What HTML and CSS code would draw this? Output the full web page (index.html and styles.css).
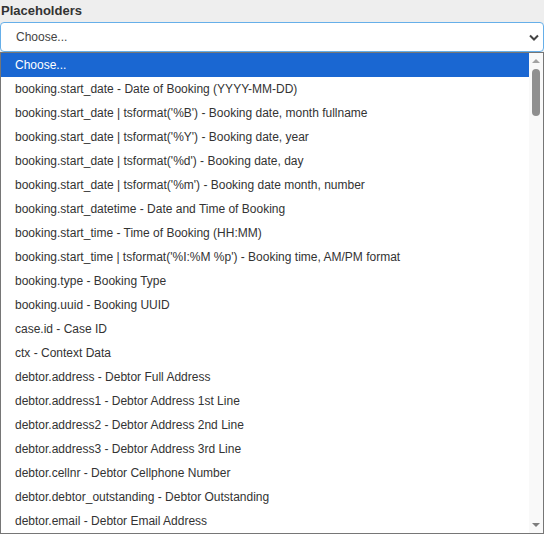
FILE: index.html
```html
<!DOCTYPE html>
<html>
<head>
<meta charset="utf-8">
<link rel="stylesheet" href="styles.css">
</head>
<body>
<div class="field">
  <div class="label">Placeholders</div>
  <div class="select">
    <span class="select-text">Choose...</span>
    <svg class="chev" width="10" height="7" viewBox="0 0 10 7"><path d="M1 1.5 L5 5.5 L9 1.5" fill="none" stroke="#444" stroke-width="2"/></svg>
  </div>
  <div class="dropdown">
    <ul class="options">
      <li class="opt selected">Choose...</li>
      <li class="opt">booking.start_date - Date of Booking (YYYY-MM-DD)</li>
      <li class="opt">booking.start_date | tsformat('%B') - Booking date, month fullname</li>
      <li class="opt">booking.start_date | tsformat('%Y') - Booking date, year</li>
      <li class="opt">booking.start_date | tsformat('%d') - Booking date, day</li>
      <li class="opt">booking.start_date | tsformat('%m') - Booking date month, number</li>
      <li class="opt">booking.start_datetime - Date and Time of Booking</li>
      <li class="opt">booking.start_time - Time of Booking (HH:MM)</li>
      <li class="opt">booking.start_time | tsformat('%I:%M %p') - Booking time, AM/PM format</li>
      <li class="opt">booking.type - Booking Type</li>
      <li class="opt">booking.uuid - Booking UUID</li>
      <li class="opt">case.id - Case ID</li>
      <li class="opt">ctx - Context Data</li>
      <li class="opt">debtor.address - Debtor Full Address</li>
      <li class="opt">debtor.address1 - Debtor Address 1st Line</li>
      <li class="opt">debtor.address2 - Debtor Address 2nd Line</li>
      <li class="opt">debtor.address3 - Debtor Address 3rd Line</li>
      <li class="opt">debtor.cellnr - Debtor Cellphone Number</li>
      <li class="opt">debtor.debtor_outstanding - Debtor Outstanding</li>
      <li class="opt">debtor.email - Debtor Email Address</li>
    </ul>
    <div class="scrollbar">
      <div class="arrow up"></div>
      <div class="track"><div class="thumb"></div></div>
      <div class="arrow down"></div>
    </div>
  </div>
</div>
</body>
</html>
```
FILE: styles.css
```css
html, body {
  margin: 0;
  padding: 0;
  background: #eeeeee;
  font-family: "Liberation Sans", Arial, sans-serif;
  width: 544px;
  height: 534px;
  overflow: hidden;
}
.field {
  display: flex;
  flex-direction: column;
}
.label {
  font-weight: bold;
  font-size: 13px;
  color: #333;
  height: 22px;
  line-height: 22px;
  padding-left: 1px;
}
.select {
  box-sizing: border-box;
  height: 30px;
  width: 544px;
  background: #fff;
  border: 1px solid #66afe9;
  border-radius: 4px;
  display: flex;
  align-items: center;
  justify-content: space-between;
  padding: 0 4px 0 15px;
  font-size: 12px;
  color: #444;
}
.chev {
  margin-top: 1px;
}
.dropdown {
  box-sizing: border-box;
  width: 544px;
  height: 482px;
  background: #fff;
  border: 1px solid #767676;
  display: flex;
  overflow: hidden;
}
.options {
  list-style: none;
  margin: 0;
  padding: 0;
  flex: 1;
  overflow: hidden;
}
.opt {
  height: 24px;
  line-height: 24px;
  padding-left: 14px;
  font-size: 12px;
  color: #333;
  white-space: nowrap;
}
.opt.selected {
  background: #1a67d2;
  color: #fff;
}
.scrollbar {
  width: 14px;
  background: #f9f9f9;
  display: flex;
  flex-direction: column;
  align-items: center;
}
.arrow {
  width: 0;
  height: 0;
  border-left: 4px solid transparent;
  border-right: 4px solid transparent;
  flex: none;
}
.arrow.up {
  border-bottom: 4px solid #a3a3a3;
  margin-top: 6px;
}
.arrow.down {
  border-top: 4px solid #7d7d7d;
  margin-bottom: 6px;
}
.track {
  flex: 1;
  width: 100%;
  display: flex;
  justify-content: center;
  padding-top: 6px;
}
.thumb {
  width: 8px;
  height: 47px;
  border-radius: 4px;
  background: #8f8f8f;
}
```
